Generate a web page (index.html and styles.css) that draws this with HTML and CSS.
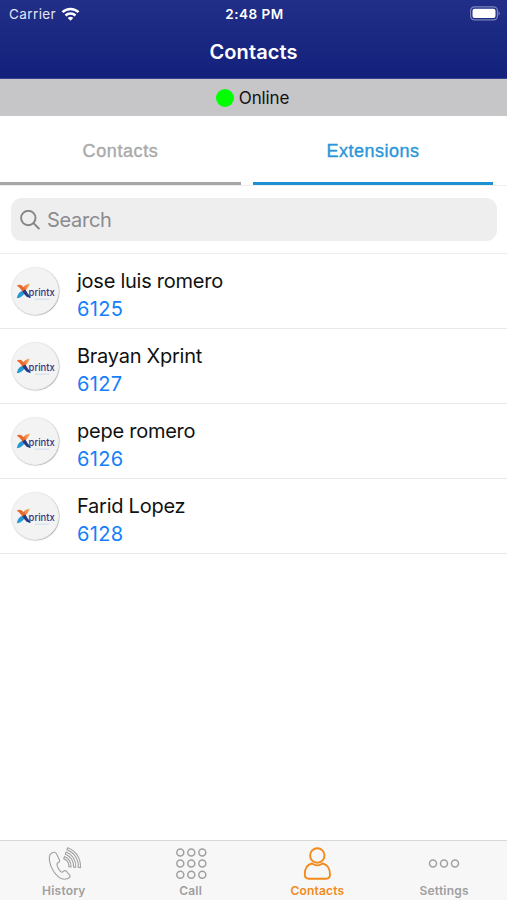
FILE: index.html
```html
<!DOCTYPE html>
<html lang="en">
<head>
<meta charset="utf-8">
<meta name="viewport" content="width=device-width">
<title>Contacts</title>
<link rel="stylesheet" href="styles.css">
</head>
<body>
<svg class="defs" aria-hidden="true">
  <defs>
    <linearGradient id="warm" x1="0" x2="1"><stop offset="0" stop-color="#e8632b"/><stop offset="1" stop-color="#f9b45f"/></linearGradient>
    <symbol id="logo" viewBox="0 0 48 48">
      <path d="M18.500 16.500c-1.500 4-4 7.500-6.500 8l-1.200-2C12 19 15 16.500 18.500 16.500z" fill="url(#warm)"/>
      <path d="M5 31.500c1-4.500 3-7.500 6.500-7.500l1.500 2.200c-1 3-4.500 5.300-8 5.300z" fill="#2499d4"/>
      <path d="M5 18.500c3-2 5.500-.5 7.500 2.200l3 4.800-3 1.300C10 23.500 8.500 20.200 5 18.500z" fill="#ea682d"/>
      <path d="M10.800 24.200l3-1.700c2 2.800 3.300 5.500 5.700 8-4 1-6-2.300-8.700-6.300z" fill="#253b85"/>
      <text class="logo-text" x="17.300" y="29" textLength="27.200" lengthAdjust="spacingAndGlyphs">printx</text>
      <path d="M24 32.500h15" stroke="#cbdced" stroke-width="1"/>
    </symbol>
  </defs>
</svg>
<div class="app">
  <header class="header">
    <div class="status">
      <div class="carrier"><span>Carrier</span>
        <svg class="wifi" viewBox="0 0 18 14"><g fill="none" stroke="#fff" stroke-width="2.500"><path d="M1 5.200a11.500 11.500 0 0 1 16 0"/><path d="M4 8.500a7.200 7.200 0 0 1 10 0"/></g><path d="M6.200 11a4 4 0 0 1 5.600 0L9 13.800z" fill="#fff"/></svg>
      </div>
      <div class="time">2:48 PM</div>
      <svg class="battery" viewBox="0 0 30 15"><rect x=".6" y=".9" width="26.800" height="13" rx="3.800" fill="none" stroke="#7b83bb" stroke-width="1.200"/><rect x="2.500" y="2.800" width="23" height="9.200" rx="2" fill="#fff"/><path d="M28.500 5.300c1.600.7 1.600 3.700 0 4.400z" fill="#7b83bb"/></svg>
    </div>
    <h1 class="title">Contacts</h1>
  </header>
  <div class="presence"><i class="dot"></i><span>Online</span></div>
  <nav class="tabs"><div class="tab">Contacts</div><div class="tab active">Extensions</div></nav>
  <div class="search-wrap"><div class="search">
    <svg class="glass" viewBox="0 0 20 20"><g fill="none" stroke="#858588" stroke-width="1.900" stroke-linecap="round"><circle cx="8.300" cy="8" r="7.200"/><path d="M13.500 13.200l5.300 5.300"/></g></svg>
    <span>Search</span></div></div>
  <main class="list">
    <div class="row"><div class="avatar"><svg><use href="#logo"/></svg></div><div><div class="name">jose luis romero</div><div class="ext">6125</div></div></div>
    <div class="row"><div class="avatar"><svg><use href="#logo"/></svg></div><div><div class="name">Brayan Xprint</div><div class="ext">6127</div></div></div>
    <div class="row"><div class="avatar"><svg><use href="#logo"/></svg></div><div><div class="name">pepe romero</div><div class="ext">6126</div></div></div>
    <div class="row"><div class="avatar"><svg><use href="#logo"/></svg></div><div><div class="name">Farid Lopez</div><div class="ext">6128</div></div></div>
  </main>
  <nav class="bar">
    <div class="item"><svg viewBox="0 0 36 36"><g fill="none" stroke="currentColor" stroke-width="1.100" stroke-linejoin="round" stroke-linecap="round"><path d="M5.500 7.300C1.500 9.800 3.500 18.800 7.500 25.300c4 6 8.500 9 13.500 7.500 2-.6 3.700-1.700 2.900-3.400l-3.700-4.400c-1.200-1-2.200-.5-3.700 1.200-2.500.4-6.300-6.600-5.300-9 2-.7 2.800-1.500 2.300-3.100L10.700 8.300C9.700 5.800 7.500 5.800 5.500 7.300z"/><path d="M18.400 10.600A10 10 0 0 1 25 20.900l-2.200-.2a7.800 7.800 0 0 0-5.100-8zM20.100 6.100a14.800 14.800 0 0 1 9.600 15.200l-2.100-.2a12.600 12.600 0 0 0-8.300-12.900zM21.700 1.700a19.500 19.500 0 0 1 12.700 20l-2.200-.2A17.300 17.300 0 0 0 20.900 3.700z"/></g></svg><span>History</span></div>
    <div class="item"><svg viewBox="0 0 36 36"><g fill="none" stroke="currentColor" stroke-width="1.500"><circle cx="7.300" cy="6.500" r="3.500"/><circle cx="18.300" cy="6.500" r="3.500"/><circle cx="29.300" cy="6.500" r="3.500"/><circle cx="7.300" cy="17.500" r="3.500"/><circle cx="18.300" cy="17.500" r="3.500"/><circle cx="29.300" cy="17.500" r="3.500"/><circle cx="7.300" cy="28.700" r="3.500"/><circle cx="18.300" cy="28.700" r="3.500"/><circle cx="29.300" cy="28.700" r="3.500"/></g></svg><span>Call</span></div>
    <div class="item selected"><svg viewBox="0 0 36 36"><g fill="none" stroke="currentColor" stroke-width="1.900" stroke-linejoin="round"><circle cx="18.300" cy="9.500" r="7.200"/><path d="M12.800 17.500c-4.500 1-7 5.500-7 11 0 3 1 4.200 4 4.200h17.200c3 0 4-1.200 4-4.200 0-5.500-2.700-10-7.200-11-1.500.2-2.500 1.900-5.500 1.900s-4-1.700-5.500-1.900z"/></g></svg><span>Contacts</span></div>
    <div class="item"><svg viewBox="0 0 36 36"><g fill="none" stroke="currentColor" stroke-width="1.500"><circle cx="7" cy="17.500" r="3.500"/><circle cx="18" cy="17.500" r="3.500"/><circle cx="29" cy="17.500" r="3.500"/></g></svg><span>Settings</span></div>
  </nav>
</div>
</body>
</html>
```
FILE: styles.css
```css
* { box-sizing: border-box; }
body { margin: 0; background: #fff; font-family: Inter, "Liberation Sans", sans-serif; color: #111; }
.defs { position: absolute; width: 0; height: 0; }
.app { height: 900px; display: flex; flex-direction: column; overflow: hidden; }
.header { height: 79px; flex: none; background: linear-gradient(#212f88, #14217c); color: #fff; border-bottom: 1px solid #35438f; }
.status { height: 27px; display: grid; grid-template-columns: 1fr auto 1fr; align-items: center; padding: 0 7px 0 9px; font-size: 13px; }
.carrier { display: flex; align-items: center; gap: 5px; font-size: 13.5px; letter-spacing: .4px; color: #e4e6f4; }
.wifi { width: 19px; height: 14px; }
.time { font-size: 13.5px; font-weight: 600; letter-spacing: .5px; }
.battery { width: 30px; height: 15px; justify-self: end; }
.title { margin: 0; text-align: center; font-size: 20px; font-weight: 600; line-height: 51px; letter-spacing: .1px; }
.presence { height: 37px; flex: none; display: flex; align-items: center; justify-content: center; gap: 5px; padding-right: 2px; background: #c6c6c8; font-size: 17px; letter-spacing: -.15px; }
.dot { width: 18px; height: 18px; border-radius: 50%; background: #0f0; }
.tabs { height: 70px; flex: none; display: grid; grid-template-columns: 241px 240px; column-gap: 12px; border-bottom: 1px solid #eee; }
.tab { height: 69px; line-height: 70px; text-align: center; color: #aaa; border-bottom: 3px solid #a6a6a6; font-family: "Liberation Sans", sans-serif; font-size: 18px; letter-spacing: .6px; -webkit-text-stroke: .4px; }
.active { color: #2a97d9; border-color: #1d91d2; letter-spacing: .5px; }
.search-wrap { height: 68px; flex: none; padding: 12px 10px 12px 11px; border-bottom: 1px solid #ededed; }
.search { height: 43px; background: #eee; border-radius: 11px; display: flex; align-items: center; padding-left: 9px; gap: 7px; font-size: 20px; letter-spacing: -.3px; color: #8b8b8e; }
.glass { width: 20px; height: 20px; }
.row { height: 75px; display: flex; padding: 13px 11px 0; border-bottom: 1px solid #e9e9e9; }
.avatar { width: 48px; height: 48px; border-radius: 50%; margin-right: 18px; background: #f3f3f4; border: 1px solid #eeeeef; box-shadow: .5px .5px 1px #aaa; }
.avatar svg { width: 46px; height: 46px; display: block; }
.logo-text { font: 500 10.5px Inter, sans-serif; fill: #35367e; }
.name, .ext { font-size: 20px; line-height: 28px; white-space: nowrap; letter-spacing: -.25px; }
.ext { color: #147efb; letter-spacing: .3px; }
.bar { margin-top: auto; height: 60px; flex: none; display: grid; grid-template-columns: repeat(4, 1fr); background: #f7f7f7; border-top: 1px solid #d9d9d9; }
.item { display: flex; flex-direction: column; align-items: center; padding: 5px 0 0 1px; color: #a0a0a0; font-size: 12px; font-weight: 600; line-height: 18px; letter-spacing: .2px; }
.item svg { width: 36px; height: 36px; flex: none; }
.selected { color: #f28a1c; }
```
